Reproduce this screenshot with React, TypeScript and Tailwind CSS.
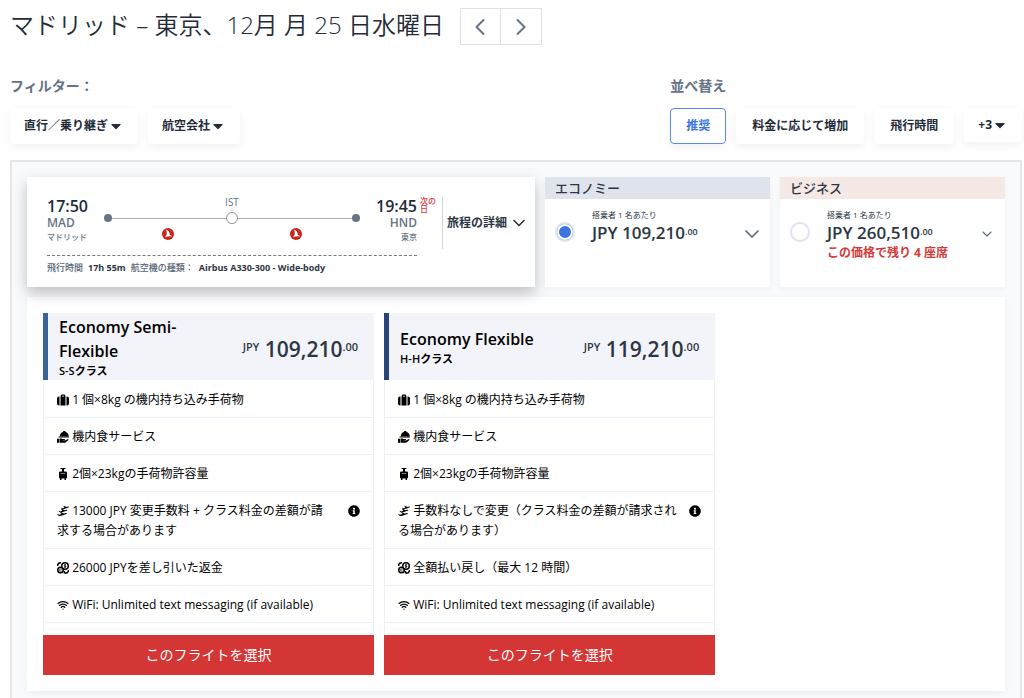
import type { ReactNode } from "react";
import { FaCaretDown, FaInfoCircle } from "react-icons/fa";
import { ChevronDown, ChevronLeft, ChevronRight, Wifi } from "lucide-react";

const iconClass = "inline size-3 align-[-2px]";

function CarryOnIcon() {
  return (
    <svg viewBox="0 0 24 24" className={iconClass} fill="currentColor" aria-hidden="true">
      <path d="M7.500 5V3.500A2.500 2.500 0 0 1 10 1h4a2.500 2.500 0 0 1 2.500 2.500V5h.5v18H7V5h.5zm2.500 0h4V3.500h-4V5z" />
      <path d="M5 5v18H4a4 4 0 0 1-4-4V9a4 4 0 0 1 4-4h1zM19 5v18h1a4 4 0 0 0 4-4V9a4 4 0 0 0-4-4h-1z" />
    </svg>
  );
}

function MealIcon() {
  return (
    <svg viewBox="0 0 24 24" className={iconClass} fill="currentColor" aria-hidden="true">
      <path d="M12 2a2.500 2.500 0 1 1 5 0c4 1 6.500 4.500 6.500 9H5.500C5.500 6.500 8 3 12 2z" />
      <path d="M3 11h21v2H3zM0 15.500h4v8H0zM5 15.500c2-1 4-1 6 .3h4c1.500 0 1.500 2.500 0 2.500h-4v.5h5l5-2.500c1.600-.7 2.700 1.100 1.300 2.200L17 23c-.6.4-1 .5-1.800.5H5z" />
    </svg>
  );
}

function LuggageIcon() {
  return (
    <svg viewBox="0 0 24 24" className={iconClass} fill="currentColor" aria-hidden="true">
      <path d="M7 0h10v2.200h-3V7h3.500A2.500 2.500 0 0 1 20 9.500V19a2 2 0 0 1-2 2v3h-3v-3H9v3H6v-3a2 2 0 0 1-2-2V9.500A2.500 2.500 0 0 1 6.500 7H10V2.200H7V0z" />
      <path d="M7.500 10.500h9v1h-9z" fill="#ffffff" />
    </svg>
  );
}

function ChangeIcon() {
  return (
    <svg viewBox="0 0 24 24" className={iconClass} fill="currentColor" aria-hidden="true">
      <path d="M8 6l1.500-.5 2 1L15 5.300 12.500 2.500l2-.6 4.500 2 3-1c2-.5 2.600 1.200 1 1.900L13 8.300h-2.500L8 6z" />
      <path d="M3 12.200l1.500-.5 2 1.200 4-1.300L8 8.700l2-.6 5 2.300 3.500-1c2-.5 2.600 1.300 1 2L8.500 15H6l-3-2.800z" />
      <path d="M0 18.700l1.500-.5 2.500 1.300 5-1.300-2.500-3 2-.5 5 2.500 4.500-1c2-.4 2.400 1.500.8 2L7 22H4l-4-3.300z" />
    </svg>
  );
}

function RefundIcon() {
  return (
    <svg viewBox="0 0 24 24" className={iconClass} fill="none" stroke="currentColor" aria-hidden="true">
      <circle cx="16" cy="8" r="6.500" strokeWidth="3" />
      <circle cx="7" cy="16" r="5.500" strokeWidth="3" />
      <path d="M18 6c-2-1.200-4-.2-3.500 1s3.500.8 3.500 2.200-2.500 1.500-4 .5M16 4v8M9 14.500c-2-1.200-4-.5-4 1.500s2 3 4 1.700" strokeWidth="1.600" />
      <path d="M1 8C1 4 3 1.500 8 1.500M23 16c0 4-2 6.500-7 6.500M15 18v5" strokeWidth="3" />
    </svg>
  );
}

function WifiIcon() {
  return <Wifi className={iconClass} strokeWidth={2.5} aria-hidden="true" />;
}

function AirlineLogo() {
  return (
    <svg viewBox="0 0 24 24" className="size-3" role="img" aria-label="Turkish Airlines">
      <circle cx="12" cy="12" r="12" fill="#c3281c" />
      <path d="M8 3c5 2 7.500 5.500 7.500 10.500 2 .6 3.500 1.700 4.500 3.500-4-.6-9-.4-14.500 1.500 2.500-2 4-4.500 4-7.500C9.500 8 9 5.500 8 3z" fill="#ffffff" />
    </svg>
  );
}

interface FilterButtonProps {
  className?: string;
  children: ReactNode;
}

function FilterButton({ className = "h-9 px-[14px]", children }: FilterButtonProps) {
  return (
    <button
      className={`flex items-center rounded bg-white text-xs font-bold whitespace-nowrap text-[#232b38] shadow-[0_3px_8px_rgba(0,0,0,0.06)] ${className}`}
    >
      {children}
    </button>
  );
}

const cabins = [
  {
    id: "economy",
    name: "エコノミー",
    headClass: "bg-[#dfe3ec]",
    price: "JPY 109,210",
    note: "",
    chevronClass: "size-6",
  },
  {
    id: "business",
    name: "ビジネス",
    headClass: "bg-[#f5e9e6]",
    price: "JPY 260,510",
    note: "この価格で残り 4 座席",
    chevronClass: "size-4",
  },
];

const fares = [
  {
    name: "Economy Semi-Flexible",
    booking: "S-Sクラス",
    price: "109,210",
    barClass: "border-[#3a6498]",
    change: "13000 JPY 変更手数料 + クラス料金の差額が請\n求する場合があります",
    refund: "26000 JPYを差し引いた返金",
  },
  {
    name: "Economy Flexible",
    booking: "H-Hクラス",
    price: "119,210",
    barClass: "border-[#27447a]",
    change: "手数料なしで変更（クラス料金の差額が請求され\nる場合があります）",
    refund: "全額払い戻し（最大 12 時間）",
  },
];

function CabinCard({ cabin }: { cabin: (typeof cabins)[number] }) {
  return (
    <label className="flex flex-col bg-white text-[#2d3645] shadow-[0_2px_6px_rgba(0,0,0,0.04)]">
      <span className={`h-[22px] px-[10px] text-[13px] leading-[22px] font-medium ${cabin.headClass}`}>{cabin.name}</span>
      <span className="flex items-start px-[10px] pt-[10px]">
        <input
          type="radio"
          name="cabin"
          value={cabin.id}
          defaultChecked={cabin.id === "economy"}
          className="mt-[13px] size-5 shrink-0 appearance-none rounded-full border-2 border-[#dfe3ec] bg-white checked:bg-[#3b76e0] checked:shadow-[inset_0_0_0_2px_#ffffff]"
        />
        <span className="ml-[17px] flex flex-1 flex-col">
          <span className="text-[8px] leading-3">搭乗者 1 名あたり</span>
          <span className="text-[17px] leading-6 font-semibold">
            {cabin.price}
            <sup className="text-[9px]">.00</sup>
          </span>
          {cabin.note && <span className="text-xs leading-4 font-bold text-[#d43a3a]">{cabin.note}</span>}
        </span>
        <span className="flex h-[50px] w-4 items-center justify-center">
          <ChevronDown className={`shrink-0 text-[#5c6b7e] ${cabin.chevronClass}`} strokeWidth={1.7} />
        </span>
      </span>
    </label>
  );
}

function FareRow({ icon, info, children }: { icon: ReactNode; info?: boolean; children: ReactNode }) {
  return (
    <li className="flex items-start border-b border-[#eaf1fa] px-[13px] pt-[9px] pb-[7px] text-xs leading-5">
      <span className="flex-1 whitespace-pre-line">
        {icon} {children}
      </span>
      {info && <FaInfoCircle className="mt-1 ml-2 size-3" aria-label="詳細" />}
    </li>
  );
}

function FareCard({ fare }: { fare: (typeof fares)[number] }) {
  return (
    <article className="flex w-[35%] flex-col text-black">
      <header className={`flex h-[67px] items-center border-l-5 bg-[#f3f4f9] pr-4 pl-[11px] ${fare.barClass}`}>
        <div className="flex-1">
          <h2 className="w-36 text-base leading-6 font-semibold">{fare.name}</h2>
          <p className="text-[11px] leading-4 font-semibold">{fare.booking}</p>
        </div>
        <p className="pt-1 text-[21px] leading-7 font-semibold whitespace-nowrap text-[#2d3645]">
          <sup className="text-[11px]">JPY</sup> {fare.price}
          <sup className="text-[11px]">.00</sup>
        </p>
      </header>
      <ul className="border-x border-[#eaf1fa] pt-px pb-3">
        <FareRow icon={<CarryOnIcon />}>1 個×8kg の機内持ち込み手荷物</FareRow>
        <FareRow icon={<MealIcon />}>機内食サービス</FareRow>
        <FareRow icon={<LuggageIcon />}>2個×23kgの手荷物許容量</FareRow>
        <FareRow icon={<ChangeIcon />} info>
          {fare.change}
        </FareRow>
        <FareRow icon={<RefundIcon />}>{fare.refund}</FareRow>
        <FareRow icon={<WifiIcon />}>WiFi: Unlimited text messaging (if available)</FareRow>
      </ul>
      <button className="h-10 bg-[#d43535] text-sm text-white">このフライトを選択</button>
    </article>
  );
}

function ItineraryCard() {
  return (
    <section className="flex bg-white shadow-[0_6px_14px_rgba(0,0,0,0.24)]">
      <div className="flex-1 pt-5 pl-5">
        <div className="flex text-[#667385]">
          <div className="w-[57px]">
            <p className="text-base leading-[18px] font-semibold text-[#232b38]">17:50</p>
            <p className="text-xs leading-4 font-semibold">MAD</p>
            <p className="text-[8px] leading-3 font-medium">マドリッド</p>
          </div>
          <div className="grid flex-1 grid-cols-2 content-start justify-items-center">
            <p className="col-span-2 text-[10px] leading-[11px]">IST</p>
            <div className="col-span-2 flex h-5 w-full items-center">
              <span className="size-2 rounded-full bg-[#667385]" />
              <span className="h-px flex-1 bg-[#a8abb0]" />
              <span className="size-3 rounded-full border border-[#8f949b] bg-white" />
              <span className="h-px flex-1 bg-[#a8abb0]" />
              <span className="size-2 rounded-full bg-[#667385]" />
            </div>
            <AirlineLogo />
            <AirlineLogo />
          </div>
          <div className="w-[57px] text-right">
            <p className="text-base leading-[18px] font-semibold text-[#232b38]">19:45</p>
            <p className="text-xs leading-4 font-semibold">HND</p>
            <p className="text-[8px] leading-3 font-medium">東京</p>
          </div>
        </div>
        <p className="mt-3 flex gap-[5px] border-t border-dashed border-[#6f7b87] pt-1 text-[9px] leading-4 font-medium whitespace-nowrap text-[#556274]">
          <span>飛行時間</span>
          <b className="font-bold text-[#2d3645]">17h 55m</b>
          <span>航空機の種類：</span>
          <b className="font-bold text-[#2d3645]">Airbus A330-300 - Wide-body</b>
        </p>
      </div>
      <p className="mt-5 ml-[3px] w-5 text-[8px] leading-[8px] font-medium text-[#d43a3a]">次の日</p>
      <button className="mt-5 mr-[6px] ml-[2px] flex h-[52px] items-center gap-[2px] border-l border-[#d3d6da] pl-1 text-xs font-bold text-[#2d3645]">
        旅程の詳細
        <ChevronDown className="size-5" />
      </button>
    </section>
  );
}

export default function App() {
  return (
    <main className="flex min-h-screen flex-col bg-white pr-[2px] pl-[10px] font-['Open_Sans','Noto_Sans_CJK_JP',sans-serif]">
      <div className="flex items-center gap-4 pt-2">
        <h1 className="pb-1 text-2xl leading-8 font-[350] text-[#232b38]">マドリッド – 東京、12月 月 25 日水曜日</h1>
        <div className="flex divide-x divide-[#dfe1ee] border border-[#dfe1ee] text-[#667385]">
          <button className="flex h-[35px] w-10 items-center justify-center" aria-label="前の日">
            <ChevronLeft className="size-7" strokeWidth={1.7} />
          </button>
          <button className="flex h-[35px] w-10 items-center justify-center" aria-label="次の日">
            <ChevronRight className="size-7" strokeWidth={1.7} />
          </button>
        </div>
      </div>

      <div className="mt-[31px] flex justify-between">
        <div>
          <p className="text-sm leading-5 font-bold text-[#667385]">フィルター：</p>
          <div className="mt-3 flex gap-[10px]">
            <FilterButton>
              直行／乗り継ぎ
              <FaCaretDown className="size-4" />
            </FilterButton>
            <FilterButton>
              航空会社
              <FaCaretDown className="size-4" />
            </FilterButton>
          </div>
        </div>
        <div>
          <p className="text-sm leading-5 font-bold text-[#667385]">並べ替え</p>
          <div className="mt-3 flex gap-[10px]">
            <button className="h-9 rounded border border-[#5c8ae6] bg-white px-[15px] text-xs font-bold text-[#3b76e0] shadow-[0_3px_8px_rgba(0,0,0,0.06)]">
              推奨
            </button>
            <FilterButton className="h-9 px-4">料金に応じて増加</FilterButton>
            <FilterButton className="h-9 px-4">飛行時間</FilterButton>
            <FilterButton className="h-[34px] px-[14px]">
              +3
              <FaCaretDown className="size-4" />
            </FilterButton>
          </div>
        </div>
      </div>

      <div className="mt-4 flex-1 border-2 border-b-0 border-[#e4e6e8] bg-[#f9fafc] px-[15px] pt-[15px] pb-[7px]">
        <div className="grid h-[110px] grid-cols-[508fr_225fr_225fr] gap-[10px]">
          <ItineraryCard />
          {cabins.map((cabin) => (
            <CabinCard key={cabin.id} cabin={cabin} />
          ))}
        </div>
        <div className="mt-[10px] flex gap-[10px] bg-white p-4 shadow-[0_2px_6px_rgba(0,0,0,0.06)]">
          {fares.map((fare) => (
            <FareCard key={fare.name} fare={fare} />
          ))}
        </div>
      </div>
    </main>
  );
}
